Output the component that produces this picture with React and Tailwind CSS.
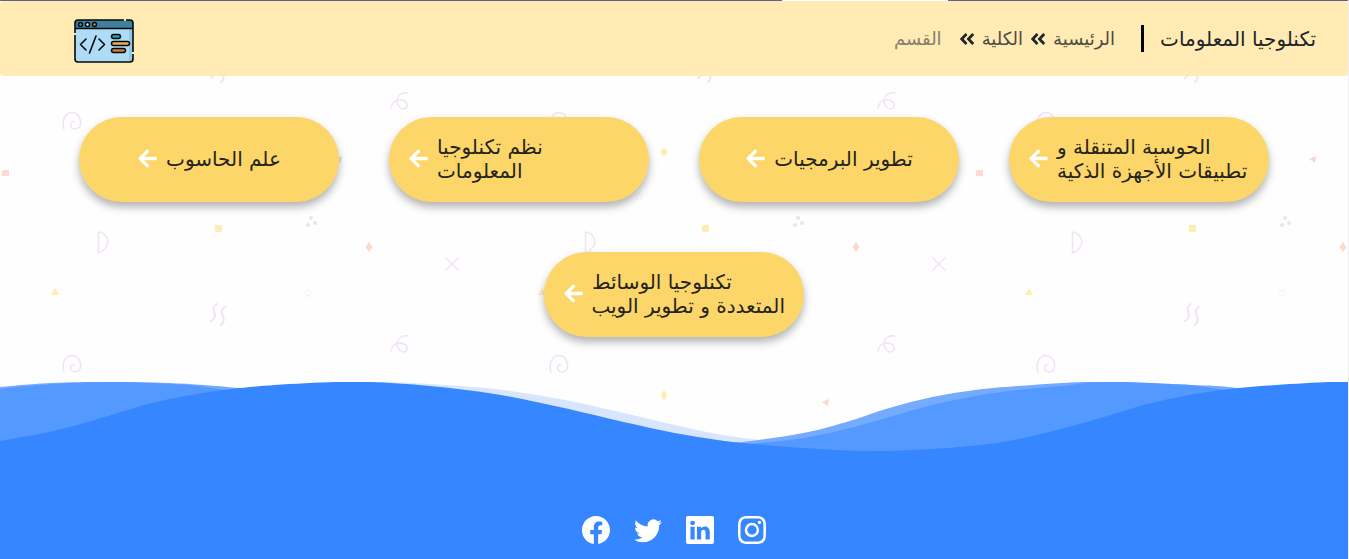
import React from "react";
import { FaAngleDoubleLeft, FaArrowLeft } from "react-icons/fa";
import { BsFacebook, BsTwitter, BsLinkedin, BsInstagram } from "react-icons/bs";

const departments = [
  { lines: ["الحوسبة المتنقلة و", "تطبيقات الأجهزة الذكية"] },
  { lines: ["تطوير البرمجيات"] },
  { lines: ["نظم تكنلوجيا", "المعلومات"] },
  { lines: ["علم الحاسوب"] },
  { lines: ["تكنلوجيا الوسائط", "المتعددة و تطوير الويب"] },
];

const socials = [
  { label: "Instagram", Icon: BsInstagram },
  { label: "LinkedIn", Icon: BsLinkedin },
  { label: "Twitter", Icon: BsTwitter },
  { label: "Facebook", Icon: BsFacebook },
];

const waves = [
  {
    fill: "#d7e5fd",
    points: [[0, 8], [75, 2], [150, 3], [240, 7], [330, 1], [380, 0], [430, 2], [495, 7], [560, 17], [624, 31], [675, 43], [718, 52], [760, 58], [830, 66], [900, 69], [1000, 60], [1100, 30], [1200, 8], [1260, 6], [1349, 3]],
  },
  {
    fill: "#75abff",
    points: [[0, 5], [50, 1], [110, 0], [170, 1], [238, 6], [300, 15], [500, 60], [700, 64], [744, 60], [804, 51], [847, 40], [890, 26], [933, 15], [976, 8], [1019, 4], [1084, 0], [1148, 1], [1191, 3], [1238, 6], [1349, 22]],
  },
  {
    fill: "#5499ff",
    points: [[0, 7], [40, 3], [105, 0], [170, 2], [213, 6], [300, 22], [500, 60], [700, 66], [761, 61], [804, 56], [847, 47], [890, 35], [933, 23], [976, 14], [1019, 8], [1062, 4], [1105, 0], [1170, 2], [1213, 6], [1349, 30]],
  },
  {
    fill: "#3586ff",
    points: [[0, 59], [54, 49], [105, 35], [148, 22], [191, 13], [232, 7], [275, 3], [335, 0], [370, 0], [430, 4], [495, 12], [560, 25], [624, 40], [675, 51], [718, 58], [744, 61], [804, 66], [869, 69], [933, 67], [998, 61], [1054, 49], [1105, 35], [1148, 22], [1191, 13], [1230, 7], [1277, 3], [1330, 0], [1349, 0]],
  },
];

function smoothPath(p) {
  let d = `M${p[0][0]},${p[0][1]}`;
  for (let i = 0; i < p.length - 1; i++) {
    const a = p[Math.max(0, i - 1)];
    const b = p[i];
    const c = p[i + 1];
    const e = p[Math.min(p.length - 1, i + 2)];
    d += ` C${b[0] + (c[0] - a[0]) / 6},${b[1] + (c[1] - a[1]) / 6} ${c[0] - (e[0] - b[0]) / 6},${c[1] - (e[1] - b[1]) / 6} ${c[0]},${c[1]}`;
  }
  return `${d} V72 H0 Z`;
}

function Confetti() {
  return (
    <svg className="absolute inset-0 -z-10 h-full w-full" aria-hidden="true">
      <defs>
        <pattern id="confetti" x="0" y="135" width="487" height="243" patternUnits="userSpaceOnUse">
          <g transform="translate(0 -135)">
            <g fill="none" stroke="#f1e3f4" strokeWidth="1.5" strokeLinecap="round" strokeLinejoin="round">
              <path d="M64 372C61 363 66 355 72.500 355.500C79 356 82 364 80 369C78 373 71 373 70.500 368C70.500 365 72 364 74 365" />
              <path d="M391 351C392 345 396 343 400 343C406 343 409 348 406 351C403 354 398 350 397 345C397 338 402 335 408 336" />
              <path d="M98.500 232V253C104 251 108 246 108 241C107 236 103 232 98.500 232Z" />
              <path d="M446 258L458 270M458 258L446 270" />
              <path d="M217 304C208 309 221 315 211 321M225 307C216 312 229 318 221 325" strokeWidth="2" />
            </g>
            <g fill="#f1e0f1">
              <circle cx="311" cy="218" r="2" />
              <circle cx="308" cy="225" r="2" />
              <circle cx="315" cy="223" r="2" />
            </g>
            <rect x="2" y="170" width="7" height="6" fill="#fddbd0" />
            <rect x="215" y="225" width="7" height="7" rx="1" fill="#fdedb4" />
            <path d="M369 242L372.500 247L369 252L365.500 247Z" fill="#fdd8ce" />
            <path d="M177 147L180.500 152L177 157L173.500 152Z" fill="#fdedb4" />
            <path d="M55 288L59 295H51Z" fill="#fdedb4" />
            <path d="M335 159L342 156L341 163Z" fill="#fbd8cc" />
            <g fill="none" stroke="#f3f1f4" strokeDasharray="2 1">
              <path d="M308 289L309 292H312L310 294L311 297L308 295L305 297L306 294L304 292H307Z" />
              <path d="M152 192L153 195H156L154 197L155 200L152 198L149 200L150 197L148 195H151Z" />
            </g>
          </g>
        </pattern>
      </defs>
      <rect width="100%" height="100%" fill="url(#confetti)" />
    </svg>
  );
}

function Logo() {
  return (
    <svg width="60" height="44" viewBox="0 0 60 44" aria-hidden="true">
      <rect x="1" y="1" width="58" height="42" rx="3" fill="#aedcf6" />
      <path d="M55 9H59V40Q59 43 55 43Z" fill="#8fc9e8" />
      <path d="M1 9.500V4Q1 1 4 1H56Q59 1 59 4V9.500Z" fill="#407f9e" />
      <rect x="1" y="1" width="58" height="42" rx="3" fill="none" stroke="#05080c" strokeWidth="1.600" />
      <path d="M1 9.500H59" stroke="#05080c" strokeWidth="1.500" />
      <g stroke="#05080c" strokeWidth="1.500">
        <circle cx="6.500" cy="5.500" r="2" fill="#35a0b4" />
        <circle cx="13.500" cy="5.500" r="2" fill="#dff2fb" />
        <circle cx="20.500" cy="5.500" r="2" fill="#e08a45" />
        <rect x="37.500" y="15.500" width="9" height="4" rx="2" fill="#2ba0aa" />
        <rect x="37.500" y="22.500" width="18" height="4" rx="2" fill="#efae4a" />
        <rect x="37.500" y="29.500" width="14" height="4" rx="2" fill="#cf7b36" />
      </g>
      <path d="M12 20L6.500 25.500L12 31M22 17L15.500 34M25 20L30.500 25.500L25 31" fill="none" stroke="#05080c" strokeWidth="1.600" strokeLinecap="round" strokeLinejoin="round" />
      <path d="M50 1H52M1 14V16M59 33V35" stroke="#ffebb3" strokeWidth="2" />
    </svg>
  );
}

export default function App() {
  return (
    <div
      dir="rtl"
      className="relative isolate flex min-h-screen flex-col overflow-hidden border-r border-[#eeeeee] bg-[#fefefe] font-['DejaVu_Sans',sans-serif] text-[#212529]"
    >
      <Confetti />
      <div className="flex h-px bg-white">
        <div className="w-[400px] bg-[#625f94]" />
        <div className="w-[166px]" />
        <div className="flex-1 bg-[#625f94]" />
      </div>
      <header className="flex h-[75px] items-center justify-between rounded bg-[#ffebb3] pr-8 pl-[74px]">
        <div className="flex items-center">
          <h1 className="text-[20px] leading-6 font-normal whitespace-nowrap">تكنلوجيا المعلومات</h1>
          <div className="mr-4 h-[27px] w-[3px] bg-black" />
          <nav aria-label="breadcrumb" className="mr-[26px] flex items-center text-[18px] leading-6 whitespace-nowrap">
            <a href="#home" className="text-[#4c4a42]">الرئيسية</a>
            <FaAngleDoubleLeft className="mx-[6px]" size={18} />
            <a href="#college" className="text-[#4c4a42]">الكلية</a>
            <FaAngleDoubleLeft className="mr-[6px] ml-4" size={18} />
            <span className="text-[#86806c]">القسم</span>
          </nav>
        </div>
        <a href="#home" aria-label="تكنلوجيا المعلومات" className="mt-[5px]">
          <Logo />
        </a>
      </header>

      <main className="flex flex-wrap justify-center gap-[50px] px-12 pt-[41px] pb-[45px]">
        {departments.map(({ lines }) => (
          <a
            key={lines[0]}
            href="#department"
            className="flex h-[85px] w-[260px] items-center justify-center gap-2 rounded-full bg-[#fdd66a] pb-0.5 shadow-[0_5px_8px_rgba(0,0,0,0.3)]"
          >
            <span className={`text-left text-[20px] leading-6 whitespace-nowrap text-[#24241c] ${lines.length > 1 ? "w-[193px]" : ""}`}>
              {lines.map((line) => (
                <span key={line} className="block">{line}</span>
              ))}
            </span>
            <FaArrowLeft size={21} className="shrink-0 text-white" />
          </a>
        ))}
      </main>

      <footer className="flex flex-1 flex-col">
        <svg className="block h-[72px] w-full" viewBox="0 0 1349 72" preserveAspectRatio="none" aria-hidden="true">
          {waves.map((wave) => (
            <path key={wave.fill} d={smoothPath(wave.points)} fill={wave.fill} />
          ))}
        </svg>
        <div className="flex flex-1 justify-center gap-6 bg-[#3586ff] pt-[62px] pb-[15px] text-white">
          {socials.map(({ label, Icon }) => (
            <a key={label} href={`#${label}`} aria-label={label} className="h-7">
              <Icon size={28} />
            </a>
          ))}
        </div>
      </footer>
    </div>
  );
}
